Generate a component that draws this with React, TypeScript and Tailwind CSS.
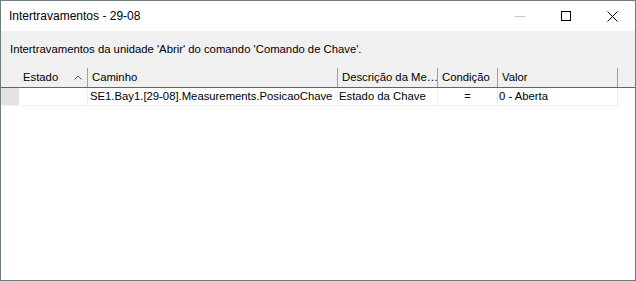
import React from 'react';

const font = { fontFamily: '"Liberation Sans", Arial, sans-serif' };

const cols = [
    { label: 'Estado', w: 'w-[69px]', sort: true },
    { label: 'Caminho', w: 'w-[250px]' },
    { label: 'Descrição da Me…', w: 'w-[100px]' },
    { label: 'Condição', w: 'w-[60px]' },
    { label: 'Valor', w: 'w-[120px]' },
];

const TitleButtons: React.FC = () => (
    <div className="flex h-full items-center">
        <div className="flex w-[46px] justify-center">
            <div className="h-px w-[10px] bg-[#c8c8c8]" />
        </div>
        <div className="flex w-[46px] justify-center">
            <div className="h-[10px] w-[10px] border border-black" />
        </div>
        <div className="flex w-[46px] justify-center">
            <svg width="11" height="11" viewBox="0 0 11 11">
                <path d="M0.5 0.5 L10.5 10.5 M10.5 0.5 L0.5 10.5" stroke="#000" strokeWidth="1" />
            </svg>
        </div>
    </div>
);

const cell = 'flex shrink-0 items-center overflow-hidden whitespace-nowrap border-r border-b border-[#f0f0f0]';

export default function App() {
    return (
        <div
            className="flex h-[281px] w-[636px] flex-col border border-[#6f7d80] bg-white text-[11.3px] text-black"
            style={font}
        >
            <div className="flex h-[30px] shrink-0 items-center justify-between">
                <span className="pl-[8px] text-[12px]">Intertravamentos - 29-08</span>
                <TitleButtons />
            </div>
            <div className="flex h-[37px] shrink-0 items-center bg-[#f0f0f0] pl-[9px] whitespace-nowrap">
                Intertravamentos da unidade 'Abrir' do comando 'Comando de Chave'.
            </div>
            <div className="flex h-[20px] shrink-0 border-b border-[#646464] bg-[#f0f0f0]">
                <div className="w-[18px] shrink-0" />
                {cols.map((c) => (
                    <div
                        key={c.label}
                        className={`${c.w} flex shrink-0 items-center justify-between overflow-hidden whitespace-nowrap border-r border-[#a0a0a0] px-[4px]`}
                    >
                        <span>{c.label}</span>
                        {c.sort && (
                            <svg width="8" height="5" viewBox="0 0 8 5" className="mr-[1px]">
                                <path d="M0.5 4.5 L4 1 L7.5 4.5" stroke="#555" fill="none" strokeWidth="1" />
                            </svg>
                        )}
                    </div>
                ))}
                <div className="flex-1" />
            </div>
            <div className="flex h-[18px] shrink-0">
                <div className="w-[18px] shrink-0 border-b border-[#f0f0f0] bg-[#e3e3e3]" />
                <div className={`${cell} w-[69px]`} />
                <div className={`${cell} w-[250px] pl-[2px]`}>SE1.Bay1.[29-08].Measurements.PosicaoChave</div>
                <div className={`${cell} w-[100px] pl-[1px]`}>Estado da Chave</div>
                <div className={`${cell} w-[60px] justify-center`}>=</div>
                <div className={`${cell} w-[120px] pl-[1px]`}>0 - Aberta</div>
            </div>
        </div>
    );
}
